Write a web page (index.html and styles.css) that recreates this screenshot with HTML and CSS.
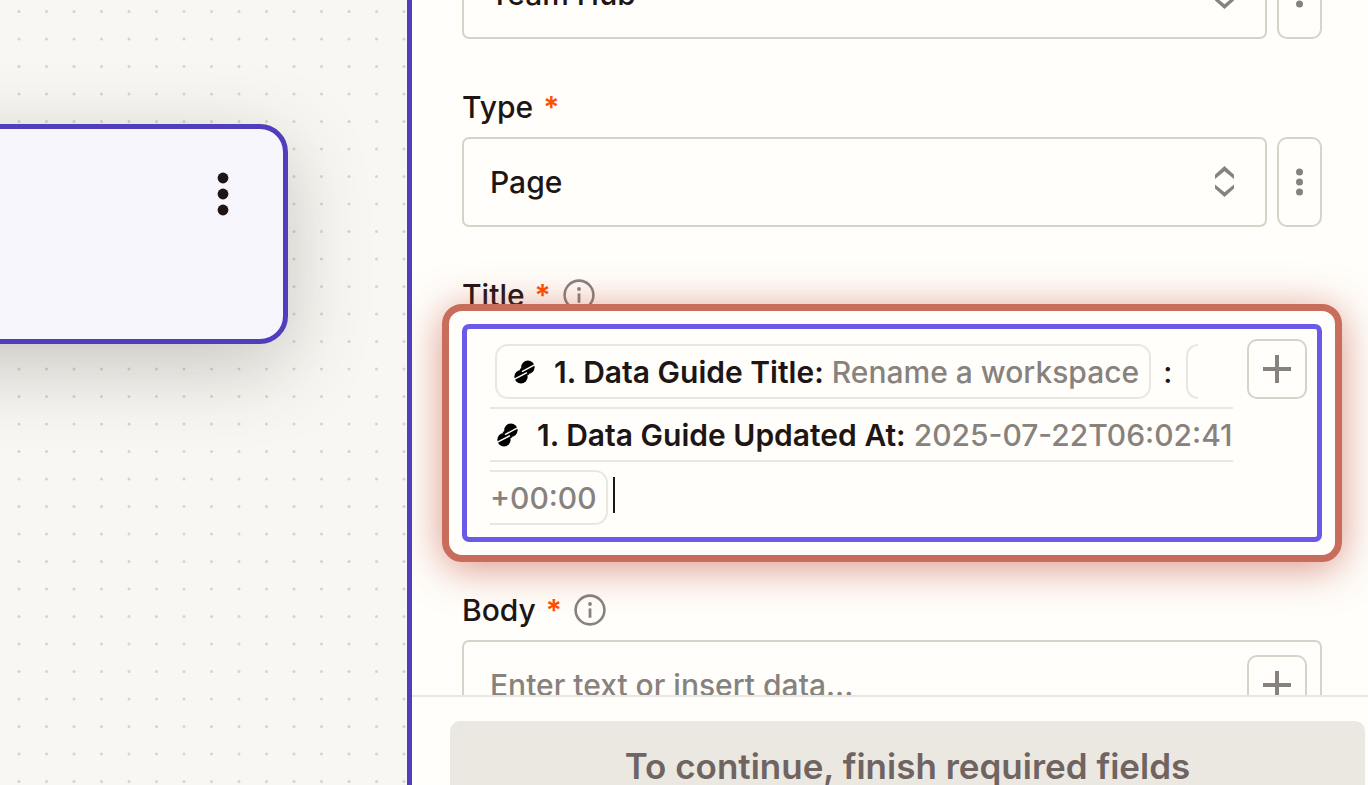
FILE: index.html
```html
<!DOCTYPE html>
<html lang="en">
<head>
<meta charset="utf-8">
<title>Step editor</title>
<link rel="stylesheet" href="styles.css">
</head>
<body>
<svg class="sprite" aria-hidden="true">
  <symbol id="updown" viewBox="0 0 20 32"><path d="M0 8.8 9.5 0 19 8.8V13L9.5 5.2 0 13ZM0 18.4 9.5 26.2 19 18.4V22.6L9.5 31 0 22.6Z"/></symbol>
  <symbol id="kebab" viewBox="0 0 9 28"><circle cx="4.5" cy="4" r="3.5"/><circle cx="4.5" cy="14" r="3.5"/><circle cx="4.5" cy="24" r="3.5"/></symbol>
  <symbol id="plus" viewBox="0 0 28 28"><path d="M12 0h4v12h12v4H16v12h-4V16H0v-4h12Z"/></symbol>
  <symbol id="info" viewBox="0 0 32 32"><circle cx="16" cy="16" r="14.4" fill="none" stroke="currentColor" stroke-width="2.6"/><circle cx="16" cy="10" r="1.9"/><path d="M14.6 14.4h2.8v9.4h-2.8Z"/></symbol>
  <symbol id="app" viewBox="0 0 34 24"><circle cx="20.9" cy="7.2" r="6.7"/><circle cx="14" cy="16.8" r="6.7"/><path d="M12.6 9 17 16.4 22.3 14.4 17 7Z"/><path d="M15 11.6 28 4.6M7 19.4 20 12.6" stroke="#fffefa" stroke-width="1.5"/></symbol>
</svg>
<div class="app">
  <main class="canvas">
    <svg class="grid" aria-hidden="true">
      <defs><pattern id="dots" width="55" height="55" patternUnits="userSpaceOnUse">
        <circle cx="19" cy="11.5" r="1.5"/><circle cx="46.5" cy="11.5" r="1.5"/><circle cx="19" cy="39" r="1.5"/><circle cx="46.5" cy="39" r="1.5"/>
      </pattern></defs>
      <rect width="100%" height="100%" fill="url(#dots)"/>
    </svg>
    <section class="node" aria-label="Step">
      <button class="node-menu" type="button" aria-label="Step options">
        <svg viewBox="0 0 12 44"><circle cx="6" cy="6" r="5.4"/><circle cx="6" cy="22" r="5.4"/><circle cx="6" cy="38" r="5.4"/></svg>
      </button>
    </section>
  </main>
  <aside class="panel">
    <form class="fields" id="step">
      <div class="row">
        <div class="select">
          <select aria-label="Workspace"><option>Team Hub</option></select>
          <svg class="updown"><use href="#updown"/></svg>
        </div>
        <button class="more" type="button" aria-label="Workspace options"><svg><use href="#kebab"/></svg></button>
      </div>
      <div class="field">
        <div class="label"><label for="type">Type</label><span class="required">*</span></div>
        <div class="row">
          <div class="select">
            <select id="type"><option>Page</option></select>
            <svg class="updown"><use href="#updown"/></svg>
          </div>
          <button class="more" type="button" aria-label="Type options"><svg><use href="#kebab"/></svg></button>
        </div>
      </div>
      <div class="field">
        <div class="label"><span id="title-label">Title</span><span class="required">*</span><svg class="info"><use href="#info"/></svg></div>
        <div class="box focused">
          <div class="editor" role="textbox" aria-labelledby="title-label"><span class="chip first"><svg class="app-icon"><use href="#app"/></svg><b>1. Data Guide Title:</b> Rename a workspace</span><span class="plain">:</span><span class="chip last"><wbr><svg class="app-icon"><use href="#app"/></svg><b>1. Data Guide Updated At:</b> <span class="stamp">2025-07-22T06:02:41</span><wbr>+00:00</span><span class="caret"></span></div>
          <button class="insert" type="button" aria-label="Insert data"><svg><use href="#plus"/></svg></button>
        </div>
      </div>
      <div class="field">
        <div class="label"><label for="body">Body</label><span class="required">*</span><svg class="info"><use href="#info"/></svg></div>
        <div class="box">
          <input class="text" id="body" type="text" placeholder="Enter text or insert data...">
          <button class="insert" type="button" aria-label="Insert data"><svg><use href="#plus"/></svg></button>
        </div>
      </div>
    </form>
    <footer class="footer">
      <button class="continue" type="submit" form="step" disabled>To continue, finish required fields</button>
    </footer>
  </aside>
</div>
</body>
</html>
```

FILE: styles.css
```css
* { box-sizing: border-box; }

body {
  margin: 0;
  font: 500 30px/40px Inter, "Liberation Sans", sans-serif;
  color: #201515;
  background: #fffefa;
}

button, select, input { font: inherit; color: inherit; margin: 0; }
button { display: flex; align-items: center; justify-content: center; padding: 0; }
svg { fill: currentColor; }

.sprite { position: absolute; width: 0; height: 0; }

.app { display: flex; height: 100vh; overflow: hidden; }

/* Canvas */
.canvas {
  position: relative;
  flex: 0 0 407px;
  overflow: hidden;
  background: #f8f7f3;
}
.grid { position: absolute; inset: 0; width: 100%; height: 100%; fill: #d6d4cb; }
.node {
  position: absolute;
  top: 124px;
  left: -320px;
  width: 608px;
  height: 220px;
  padding: 43px 54px;
  display: flex;
  justify-content: flex-end;
  align-items: flex-start;
  border: 5px solid #503ebd;
  border-radius: 28px;
  background: #f7f6fd;
  box-shadow: 0 22px 80px rgba(60, 55, 40, .26);
}
.node-menu { border: 0; background: none; }
.node-menu svg { width: 12px; height: 44px; }

/* Panel */
.panel {
  flex: 1;
  min-width: 0;
  display: flex;
  flex-direction: column;
  border-left: 5px solid #503ebd;
  background: #fffefa;
}
.fields {
  flex: 1;
  min-height: 0;
  overflow: hidden;
  padding: 0 46px 0 50px;
}
.fields > .row { margin-top: -51px; }
.field { margin-top: 48px; }
.label { display: flex; align-items: center; height: 40px; margin-bottom: 10px; }
.required { margin-left: 10px; color: #ff4f00; font-weight: 600; }
.info { width: 32px; height: 32px; margin-left: 12px; color: #88827e; }

.row { display: flex; gap: 10px; height: 90px; }
.select { position: relative; flex: 1; min-width: 0; }
.select select {
  width: 100%;
  height: 100%;
  padding: 0 80px 0 26px;
  appearance: none;
  border: 2px solid #d5d4c9;
  border-radius: 7px;
  background: #fffefa;
}
.updown {
  position: absolute;
  top: 29px;
  right: 32px;
  width: 20px;
  height: 32px;
  color: #88827e;
  pointer-events: none;
}
.more {
  width: 45px;
  border: 2px solid #d5d4c9;
  border-radius: 10px;
  background: none;
  color: #88827e;
}
.more svg { width: 9px; height: 28px; }

.box {
  position: relative;
  display: flex;
  align-items: flex-start;
  gap: 15px;
  padding: 13px 13px 13px 26px;
  border: 2px solid #d5d4c9;
  border-radius: 7px;
}
.focused {
  gap: 12px;
  margin-top: -11px;
  padding: 10px 10px 7px 23px;
  border: 5px solid #695be8;
}
.label:has(+ .focused) { margin-bottom: 20px; }
.focused::after {
  content: "";
  position: absolute;
  z-index: 1;
  inset: -25px;
  border: 7px solid #c86d5b;
  border-radius: 20px;
  box-shadow: 0 6px 40px rgba(190, 65, 45, .55);
  pointer-events: none;
}
.editor { flex: 1; min-width: 0; padding-top: 2px; line-height: 63px; color: #88827e; }
.chip { padding: 8px 10px 7px; border: 2px solid #e9e8e0; border-radius: 13px; }
.first { margin-left: 5px; }
.last { padding-right: 9px; }
.chip b { font-weight: 600; color: #201515; }
.app-icon { width: 34px; height: 24px; margin-right: 13px; vertical-align: -1px; color: #000; }
.plain { margin: 0 14px 0 12px; color: #201515; }
.stamp { white-space: nowrap; }
.caret {
  display: inline-block;
  width: 2px;
  height: 36px;
  margin-left: 5px;
  vertical-align: -4px;
  background: #201515;
}
.insert {
  flex: none;
  width: 60px;
  height: 60px;
  border: 2px solid #d5d4c9;
  border-radius: 10px;
  background: #fffefa;
  color: #88827e;
}
.insert svg { width: 28px; height: 28px; }
.text {
  flex: 1;
  min-width: 0;
  height: 60px;
  padding: 0;
  border: 0;
  outline: 0;
  background: none;
}
.text::placeholder { color: #88827e; opacity: 1; }

/* Footer */
.footer {
  flex: none;
  height: 90px;
  padding: 24px 3px 0 38px;
  overflow: hidden;
  border-top: 2px solid #e8e7e1;
}
.continue {
  width: 100%;
  height: 90px;
  border: 0;
  border-radius: 10px;
  background: #ebe8e1;
  color: #6f6462;
  font-size: 35px;
  font-weight: 600;
}
```
